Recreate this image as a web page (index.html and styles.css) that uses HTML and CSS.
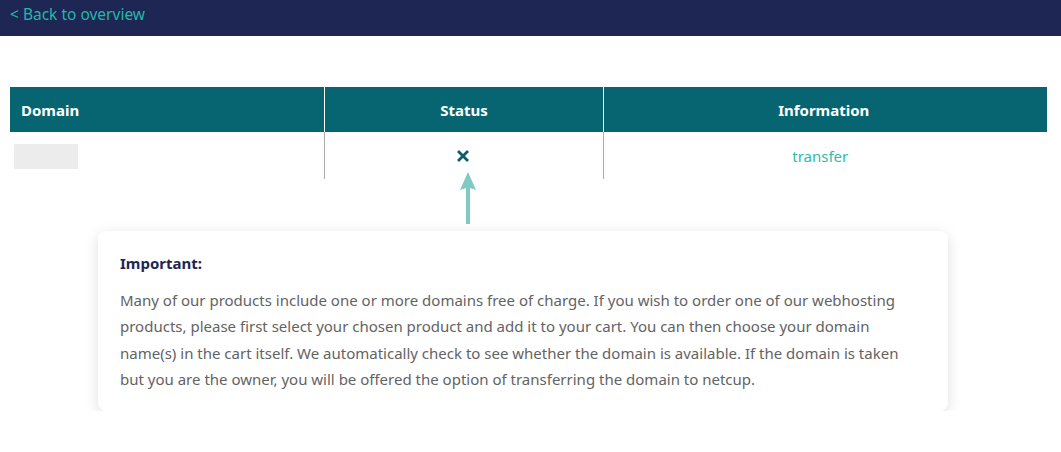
FILE: index.html
```html
<!DOCTYPE html>
<html lang="en">

<head>
    <meta charset="UTF-8">
    <meta name="viewport" content="width=device-width, initial-scale=1.0">
    <title>Domain check</title>
    <link rel="stylesheet" href="styles.css">
</head>

<body>
    <nav class="topbar">
        <a href="#" class="back-link">&lt; Back to overview</a>
    </nav>

    <main class="content">
        <table class="domain-table">
            <colgroup>
                <col style="width: 314px">
                <col style="width: 279px">
                <col>
            </colgroup>
            <thead>
                <tr>
                    <th class="col-domain">Domain</th>
                    <th class="col-status">Status</th>
                    <th class="col-info">Information</th>
                </tr>
            </thead>
            <tbody>
                <tr>
                    <td class="col-domain"><span class="domain-placeholder"></span></td>
                    <td class="col-status">
                        <svg class="status-x" width="12" height="12" viewBox="0 0 12 12">
                            <path d="M2 2 L10 10 M10 2 L2 10" stroke="#0b5d6b" stroke-width="2.8" stroke-linecap="square"/>
                        </svg>
                    </td>
                    <td class="col-info"><a href="#" class="info-link">transfer</a></td>
                </tr>
            </tbody>
        </table>

        <div class="pointer">
            <svg width="18" height="52" viewBox="0 0 18 52">
                <path d="M9 0 L17 18 L11 16 L11 52 L7 52 L7 16 L1 18 Z" fill="#7fcac1"/>
            </svg>
        </div>

        <div class="notice">
            <h3>Important:</h3>
            <p>Many of our products include one or more domains free of charge. If you wish to order one of our webhosting
                products, please first select your chosen product and add it to your cart. You can then choose your domain
                name(s) in the cart itself. We automatically check to see whether the domain is available. If the domain is taken
                but you are the owner, you will be offered the option of transferring the domain to netcup.</p>
        </div>
    </main>
</body>

</html>
```

FILE: styles.css
```css
body {
    font-family: 'Noto Sans', sans-serif;
    margin: 0;
    padding: 0;
    background-color: #fff;
    color: #555;
}
.topbar {
    background-color: #1e2654;
    height: 36px;
    padding-left: 10px;
    display: flex;
    align-items: center;
}
.back-link {
    color: #22b8aa;
    text-decoration: none;
    font-size: 15.5px;
    margin-top: -8px;
}
.content {
    padding: 51px 14px 0 10px;
}
.domain-table {
    width: 1037px;
    border-collapse: collapse;
    table-layout: fixed;
}
.domain-table th {
    background-color: #066570;
    color: #fff;
    font-weight: bold;
    font-size: 15px;
    height: 45px;
    padding: 0 10px 0 11px;
    border-left: 1px solid #fff;
}
.domain-table td {
    height: 47px;
    padding: 0 4px;
    text-align: center;
    border-left: 1px solid #aaa;
}
.domain-table th:first-child,
.domain-table td:first-child {
    border-left: none;
}
.domain-table .col-domain {
    text-align: left;
}
.domain-table .col-status,
.domain-table .col-info {
    text-align: center;
}
.domain-table .col-info {
    padding-right: 14px;
}
.domain-placeholder {
    display: block;
    width: 64px;
    height: 25px;
    background-color: #ececec;
    margin-top: 1px;
}
.status-x {
    display: block;
    margin: 0 auto;
    transform: translateX(-1px);
}
.info-link {
    color: #2cbcb0;
    text-decoration: none;
    font-size: 15px;
}
.pointer {
    padding-left: 449px;
    margin-top: -7px;
    height: 59px;
    line-height: 0;
}
.notice {
    margin-left: 88px;
    width: 850px;
    box-sizing: border-box;
    height: 180px;
    padding: 22px 22px;
    border-radius: 8px;
    box-shadow: 0 3px 14px rgba(0, 0, 0, 0.13);
    background-color: #fff;
}
.notice h3 {
    margin: 0 0 14px;
    font-size: 15px;
    color: #1e2654;
    font-weight: bold;
}
.notice p {
    margin: 0;
    font-size: 15px;
    line-height: 26.4px;
    color: #636363;
}
```
